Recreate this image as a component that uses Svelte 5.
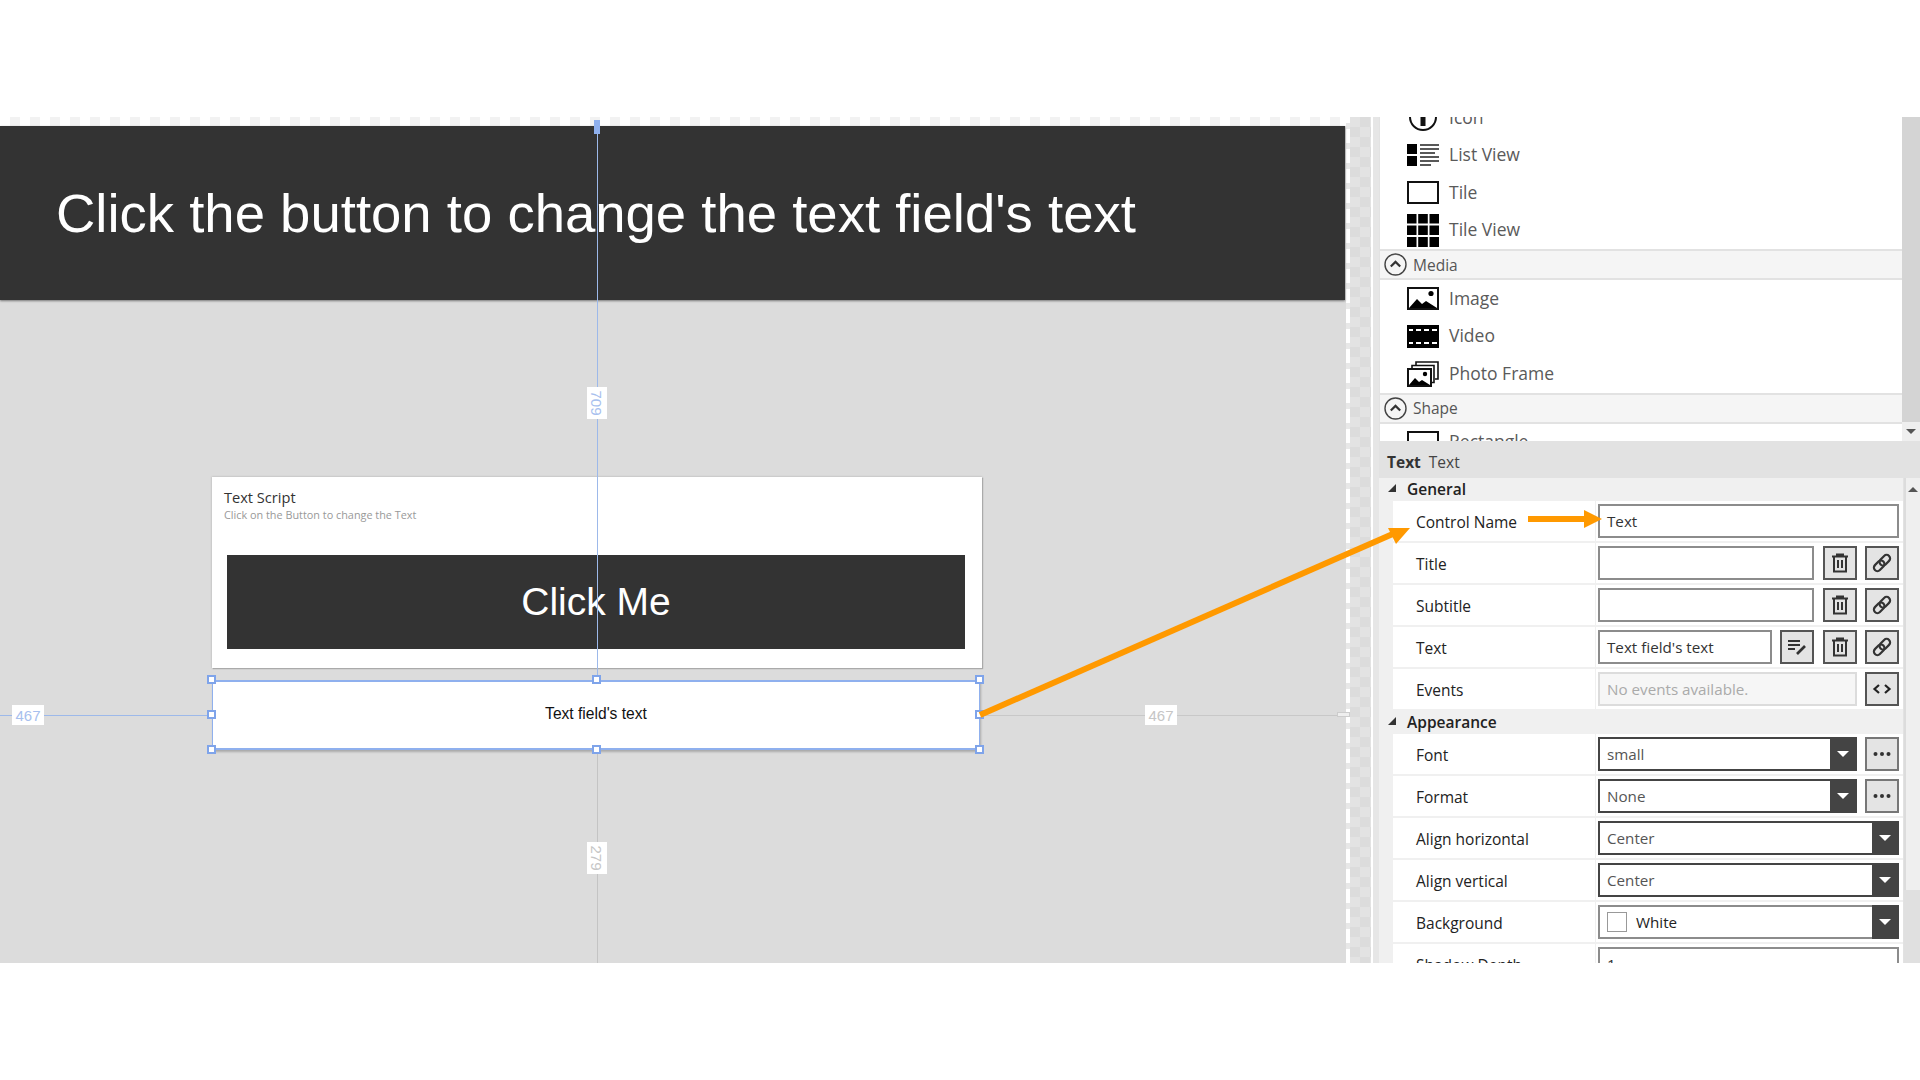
<script>
  const listTop = [
    { icon: 'icon', label: 'Icon' },
    { icon: 'list', label: 'List View' },
    { icon: 'tile', label: 'Tile' },
    { icon: 'grid', label: 'Tile View' }
  ];
  const listMedia = [
    { icon: 'image', label: 'Image' },
    { icon: 'video', label: 'Video' },
    { icon: 'frame', label: 'Photo Frame' }
  ];

  const general = [
    { label: 'Control Name', value: 'Text', kind: 'input' },
    { label: 'Title', value: '', kind: 'input', btns: ['trash', 'link'] },
    { label: 'Subtitle', value: '', kind: 'input', btns: ['trash', 'link'] },
    { label: 'Text', value: "Text field's text", kind: 'input', btns: ['edit', 'trash', 'link'] },
    { label: 'Events', value: 'No events available.', kind: 'disabled', btns: ['code'] }
  ];
  const appearance = [
    { label: 'Font', value: 'small', kind: 'select', btns: ['more'] },
    { label: 'Format', value: 'None', kind: 'select', btns: ['more'] },
    { label: 'Align horizontal', value: 'Center', kind: 'select' },
    { label: 'Align vertical', value: 'Center', kind: 'select' },
    { label: 'Background', value: 'White', kind: 'color' },
    { label: 'Shadow Depth', value: '1', kind: 'input' }
  ];
</script>

{#snippet listIcon(name)}
  <svg class="list-icon" width="32" height="33" viewBox="0 0 32 33">
    {#if name === 'icon'}
      <circle cx="16" cy="16" r="13" fill="none" stroke="#111" stroke-width="2" />
      <rect x="13.5" y="7" width="5" height="18" fill="#111" />
    {:else if name === 'list'}
      <path d="M0 5h10v10H0zM0 17h10v10H0z" fill="#000" />
      <path d="M13 6h19M13 10h19M13 14h15M13 18h19M13 22h19M13 26h11" stroke="#222" stroke-width="1.5" />
    {:else if name === 'tile'}
      <rect x="1" y="6" width="30" height="21" fill="#fff" stroke="#111" stroke-width="2" />
    {:else if name === 'grid'}
      <path d="M0 0h9.5v9.5H0zM11.2 0h9.6v9.5h-9.6zM22.5 0H32v9.5h-9.5zM0 11.5h9.5V21H0zM11.2 11.5h9.6V21h-9.6zM22.5 11.5H32V21h-9.5zM0 23h9.5v10H0zM11.2 23h9.6v10h-9.6zM22.5 23H32v10h-9.5z" fill="#000" />
    {:else if name === 'image'}
      <rect x="1" y="6" width="30" height="21" fill="#fff" stroke="#111" stroke-width="2" />
      <path d="M2 26l8-9 5 5 4-3 11 7z" fill="#000" />
      <circle cx="24" cy="11.5" r="2.6" fill="#000" />
    {:else if name === 'video'}
      <rect x="0" y="5" width="32" height="23" fill="#000" />
      <path d="M2 9h4v2H2zM9 9h5v2H9zM17 9h5v2h-5zM25 9h5v2h-5zM2 22h4v2H2zM9 22h5v2H9zM17 22h5v2h-5zM25 22h5v2h-5z" fill="#fff" />
    {:else if name === 'frame'}
      <path d="M9 9V5h22v17h-3M5 12V8.5h22v17h-3" fill="none" stroke="#111" stroke-width="1.6" />
      <rect x="1" y="12" width="23" height="17" fill="#fff" stroke="#111" stroke-width="2" />
      <path d="M2 28l6-7 4 4 3-2 8 5z" fill="#000" />
      <circle cx="18" cy="17" r="2.2" fill="#000" />
    {/if}
  </svg>
{/snippet}

{#snippet btnIcon(name)}
  <svg width="22" height="22" viewBox="0 0 22 22">
    {#if name === 'trash'}
      <path d="M3 4.5h16M8 4.5V2.5h6v2M5 4.5v15h12v-15" fill="none" stroke="#333" stroke-width="2" />
      <path d="M9 8v8M13 8v8" stroke="#333" stroke-width="2" />
    {:else if name === 'link'}
      <g transform="rotate(-45 11 11)" fill="none" stroke="#333" stroke-width="2.2">
        <rect x="1" y="7.5" width="12" height="7" rx="3.5" />
        <rect x="9" y="7.5" width="12" height="7" rx="3.5" />
      </g>
    {:else if name === 'edit'}
      <path d="M2 5h12M2 9h12M2 13h7" stroke="#333" stroke-width="1.8" />
      <path d="M11 18l8-8" stroke="#333" stroke-width="2.6" />
    {:else if name === 'code'}
      <path d="M8 7l-4.5 4 4.5 4M14 7l4.5 4-4.5 4" fill="none" stroke="#222" stroke-width="2.2" />
    {:else if name === 'more'}
      <circle cx="4.5" cy="11" r="2" fill="#333" /><circle cx="11" cy="11" r="2" fill="#333" /><circle cx="17.5" cy="11" r="2" fill="#333" />
    {/if}
  </svg>
{/snippet}

{#snippet chevron()}
  <svg class="chev" width="23" height="23" viewBox="0 0 23 23">
    <circle cx="11.5" cy="11.5" r="10.5" fill="none" stroke="#444" stroke-width="1.4" />
    <path d="M6.8 13.5l4.7-4.6 4.7 4.6" fill="none" stroke="#333" stroke-width="2.2" />
  </svg>
{/snippet}

{#snippet propRows(rows)}
  {#each rows as row}
    <div class="prop-row">
      <div class="prop-label">{row.label}</div>
      <div class="prop-value">
        {#if row.kind === 'input'}
          <div class="field">{row.value}</div>
        {:else if row.kind === 'disabled'}
          <div class="field disabled">{row.value}</div>
        {:else if row.kind === 'select'}
          <div class="field select"><span>{row.value}</span><i class="caret"></i></div>
        {:else if row.kind === 'color'}
          <div class="field select soft"><b class="swatch"></b><span class="color-name">{row.value}</span><i class="caret"></i></div>
        {/if}
        {#each row.btns ?? [] as b}
          <div class="icon-btn" class:soft={b === 'more'}>{@render btnIcon(b)}</div>
        {/each}
      </div>
    </div>
  {/each}
{/snippet}

<div class="page">
  <div class="band"></div>

  <div class="main">
    <div class="stage">
      <div class="checker-top"></div>
      <div class="banner">Click the button to change the text field's text</div>

      <div class="card">
        <div class="card-title">Text Script</div>
        <div class="card-sub">Click on the Button to change the Text</div>
        <div class="card-btn">Click Me</div>
      </div>

      <div class="guide v blue-line"></div>
      <div class="guide v gray-line"></div>
      <div class="guide h blue-line"></div>
      <div class="guide h gray-line"></div>
      <div class="top-grip"></div>
      <div class="end-grip"></div>

      <div class="text-field">Text field's text</div>
      {#each [[212, 680], [597, 680], [980, 680], [212, 715], [980, 715], [212, 750], [597, 750], [980, 750]] as [x, y]}
        <span class="handle" style="left:{x - 5}px;top:{y - 117 - 5}px"></span>
      {/each}

      <span class="tag vert t-709">709</span>
      <span class="tag vert t-279">279</span>
      <span class="tag t-left">467</span>
      <span class="tag t-right">467</span>
    </div>

    <div class="strip"><div class="dashes"></div><div class="checks"></div><div class="gutter"></div></div>

    <div class="panel">
      <div class="toolbox">
        <div class="toolbox-list">
          {#each listTop as item}
            <div class="tool">{@render listIcon(item.icon)}<span>{item.label}</span></div>
          {/each}
          <div class="group">{@render chevron()}<span>Media</span></div>
          {#each listMedia as item}
            <div class="tool">{@render listIcon(item.icon)}<span>{item.label}</span></div>
          {/each}
          <div class="group">{@render chevron()}<span>Shape</span></div>
          <div class="tool">{@render listIcon('tile')}<span>Rectangle</span></div>
        </div>
        <div class="list-scroll"><div class="scroll-btn"><i class="tri-down"></i></div></div>
      </div>

      <div class="props-title"><b>Text</b><span>Text</span></div>

      <div class="props">
        <div class="props-body">
          <div class="prop-head"><i class="corner"></i>General</div>
          {@render propRows(general)}
          <div class="prop-head"><i class="corner"></i>Appearance</div>
          {@render propRows(appearance)}
        </div>
        <div class="props-scroll">
          <div class="scroll-up"><i class="tri-up"></i></div>
          <div class="scroll-rest"></div>
        </div>
      </div>
    </div>

    <svg class="arrows" width="1920" height="846" viewBox="0 117 1920 846">
      <path d="M980 715L1395 533" stroke="#ff9900" stroke-width="6" />
      <path d="M1410 528L1388 528L1396 544z" fill="#ff9900" />
      <path d="M1528 519H1586" stroke="#ff9900" stroke-width="6" />
      <path d="M1584 510L1602 519L1584 528z" fill="#ff9900" />
    </svg>
  </div>

  <div class="band"></div>
</div>

<style>
  :global(body) {
    margin: 0;
    background: #fff;
  }

  .page {
    width: 1920px;
    height: 1080px;
    display: flex;
    flex-direction: column;
    overflow: hidden;
  }

  .band {
    height: 117px;
    background: #fff;
    flex: none;
  }

  .main {
    position: relative;
    height: 846px;
    display: flex;
    overflow: hidden;
  }

  /* design canvas */
  .stage {
    position: relative;
    width: 1346px;
    flex: none;
    background: #dcdcdc;
    font-family: "Liberation Sans", Arial, sans-serif;
  }

  .checker-top {
    height: 9px;
    background: repeating-linear-gradient(90deg, #fff 0 10px, #f2f2f2 10px 20px);
  }

  .banner {
    width: 1345px;
    height: 174px;
    box-sizing: border-box;
    padding-left: 56px;
    display: flex;
    align-items: center;
    background: #333;
    color: #fff;
    font-size: 54.5px;
    box-shadow: 0 1px 2px #777;
  }

  .card {
    position: absolute;
    left: 212px;
    top: 360px;
    width: 770px;
    height: 191px;
    box-sizing: border-box;
    padding: 10px 17px 0 12px;
    background: #fff;
    box-shadow: 0 0 2px #aaa, 1px 1px 1px #aaa;
    font-family: "Open Sans", sans-serif;
  }

  .card-title {
    font-size: 14.6px;
    line-height: 21px;
    color: #333;
  }

  .card-sub {
    font-size: 10.85px;
    line-height: 14px;
    color: #999;
  }

  .card-btn {
    margin: 33px 0 0 3px;
    height: 94px;
    display: flex;
    align-items: center;
    justify-content: center;
    background: #333;
    color: #fff;
    font-size: 39px;
    font-family: "Liberation Sans", Arial, sans-serif;
  }

  .text-field {
    position: absolute;
    left: 212px;
    top: 563px;
    width: 768px;
    height: 70px;
    padding-bottom: 2px;
    display: flex;
    align-items: center;
    justify-content: center;
    background: #fff;
    border: 1px solid #8fb0ee;
    border-width: 2px 1px;
    box-sizing: border-box;
    box-shadow: 1px 2px 2px #aaa;
    color: #111;
    font-size: 15.6px;
  }

  .handle {
    position: absolute;
    width: 5px;
    height: 5px;
    background: #fff;
    border: 2px solid #7fa4ea;
  }

  .guide {
    position: absolute;
  }

  .guide.v {
    left: 597px;
    width: 1px;
  }

  .guide.h {
    top: 598px;
    height: 1px;
  }

  .v.blue-line {
    top: 9px;
    height: 554px;
    background: #9db9ea;
  }

  .v.gray-line {
    top: 633px;
    height: 213px;
    background: #c4c4c4;
  }

  .h.blue-line {
    left: 0;
    width: 212px;
    background: #9db9ea;
  }

  .h.gray-line {
    left: 980px;
    width: 357px;
    background: #c8c8c8;
  }

  .top-grip {
    position: absolute;
    left: 594px;
    top: 3px;
    width: 6px;
    height: 14px;
    background: #8fb0ee;
  }

  .end-grip {
    position: absolute;
    left: 1337px;
    top: 595px;
    width: 13px;
    height: 5px;
    box-sizing: border-box;
    background: #eee;
    border: 1px solid #ccc;
  }

  .tag {
    position: absolute;
    display: flex;
    align-items: center;
    justify-content: center;
    width: 32px;
    height: 20px;
    background: #fff;
    color: #c6c6c6;
    font-size: 15px;
  }

  .tag.vert {
    transform: rotate(90deg);
  }

  .t-709 {
    left: 581px;
    top: 276px;
    color: #a7c0ee;
  }

  .t-279 {
    left: 581px;
    top: 731px;
  }

  .t-left {
    left: 12px;
    top: 588px;
    color: #a7c0ee;
  }

  .t-right {
    left: 1145px;
    top: 588px;
  }

  /* strip between canvas and panel */
  .strip {
    width: 33px;
    flex: none;
    display: flex;
  }

  .dashes {
    width: 4px;
    background: repeating-linear-gradient(0deg, #fff 0 14px, #e8e8e8 14px 20px);
  }

  .checks {
    width: 21px;
    background: conic-gradient(#dcdcdc 25%, #e3e3e3 0 50%, #dcdcdc 0 75%, #e3e3e3 0) 0 0 / 20px 20px;
    border-right: 2px solid #fff;
  }

  .gutter {
    flex: 1;
    background: #e6e6e6;
  }

  /* right panel */
  .panel {
    flex: 1;
    min-width: 0;
    display: flex;
    flex-direction: column;
    font-family: "Open Sans", sans-serif;
    background: #e2e2e2;
  }

  .toolbox {
    height: 324px;
    flex: none;
    display: flex;
    overflow: hidden;
  }

  .toolbox-list {
    flex: 1;
    min-width: 0;
    margin: -18px 0 0 1px;
    background: #fff;
  }

  .tool {
    height: 37.5px;
    box-sizing: border-box;
    display: flex;
    align-items: center;
    gap: 10px;
    padding-left: 27px;
    font-size: 17.5px;
    color: #5a5a5a;
  }

  .tool span {
    padding-bottom: 2px;
  }

  .list-icon {
    flex: none;
  }

  .group {
    height: 31px;
    box-sizing: border-box;
    display: flex;
    align-items: center;
    gap: 6px;
    padding-left: 4px;
    background: #f5f5f5;
    border-top: 2px solid #e2e2e2;
    border-bottom: 2px solid #e2e2e2;
    font-size: 15.5px;
    color: #555;
  }

  .list-scroll {
    width: 18px;
    flex: none;
    display: flex;
    flex-direction: column;
    justify-content: flex-end;
    background: #d4d4d4;
  }

  .scroll-btn {
    height: 19px;
    display: flex;
    align-items: center;
    justify-content: center;
    background: #efefef;
  }

  .tri-down {
    border: 5px solid transparent;
    border-top: 5px solid #555;
    border-bottom: 0;
  }

  .tri-up {
    border: 5px solid transparent;
    border-bottom: 5px solid #555;
    border-top: 0;
  }

  .props-title {
    height: 37px;
    flex: none;
    box-sizing: border-box;
    padding: 4px 0 0 8px;
    display: flex;
    align-items: center;
    gap: 8px;
    font-size: 15.5px;
    color: #444;
  }

  .props-title b {
    font-weight: 700;
    color: #333;
  }

  .props {
    flex: 1;
    min-height: 0;
    display: flex;
    overflow: hidden;
  }

  .props-body {
    width: 524px;
    flex: none;
    background: #f0f0f0;
  }

  .prop-head {
    position: relative;
    height: 23px;
    box-sizing: border-box;
    padding: 0 0 2px 28px;
    display: flex;
    align-items: center;
    font-size: 15.5px;
    font-weight: 600;
    color: #222;
  }

  .corner {
    position: absolute;
    left: 9px;
    top: 6px;
    width: 0;
    height: 0;
    border-left: 8px solid transparent;
    border-bottom: 8px solid #333;
  }

  .prop-row {
    height: 40px;
    margin: 0 0 2px 14px;
    display: flex;
    gap: 1px;
    font-size: 15.5px;
  }

  .prop-label {
    width: 202px;
    flex: none;
    box-sizing: border-box;
    padding: 1px 0 0 23px;
    display: flex;
    align-items: center;
    background: #fff;
    color: #222;
  }

  .prop-value {
    flex: 1;
    min-width: 0;
    box-sizing: border-box;
    padding: 3px 4px 3px 2px;
    display: flex;
    gap: 8.5px;
    background: #fff;
  }

  .field {
    flex: 1;
    min-width: 0;
    height: 34px;
    box-sizing: border-box;
    padding-left: 7px;
    display: flex;
    align-items: center;
    border: 2px solid #8c8c8c;
    background: #fff;
    color: #333;
    font-size: 15.2px;
  }

  .field.disabled {
    background: #f6f6f6;
    border-color: #dcdcdc;
    color: #aaa;
  }

  .field.select {
    position: relative;
    border-color: #444;
    color: #555;
  }

  .field.select.soft {
    border-color: #8c8c8c;
  }

  .caret {
    position: absolute;
    right: -2px;
    top: -2px;
    bottom: -2px;
    width: 27px;
    background: #444;
  }

  .caret::after {
    content: "";
    position: absolute;
    left: 7px;
    top: 14px;
    border: 6px solid transparent;
    border-top: 6px solid #fff;
    border-bottom: 0;
  }

  .swatch {
    width: 20px;
    height: 20px;
    box-sizing: border-box;
    border: 1.5px solid #999;
    background: #fff;
    flex: none;
  }

  .color-name {
    margin-left: 9px;
    color: #222;
  }

  .icon-btn {
    width: 34px;
    height: 34px;
    flex: none;
    box-sizing: border-box;
    display: flex;
    align-items: center;
    justify-content: center;
    border: 2px solid #555;
    background: #e4e4e4;
  }

  .icon-btn.soft {
    border-color: #777;
  }

  .props-scroll {
    flex: 1;
    display: flex;
    flex-direction: column;
    margin-left: 1px;
  }

  .scroll-up {
    height: 412px;
    padding-top: 9px;
    box-sizing: border-box;
    display: flex;
    justify-content: center;
    background: #efefef;
    border-left: 2px solid #dcdcdc;
  }

  .scroll-up i {
    height: 0;
  }

  .scroll-rest {
    flex: 1;
    background: #e0e0e0;
  }

  .arrows {
    position: absolute;
    left: 0;
    top: 0;
    pointer-events: none;
  }
</style>
